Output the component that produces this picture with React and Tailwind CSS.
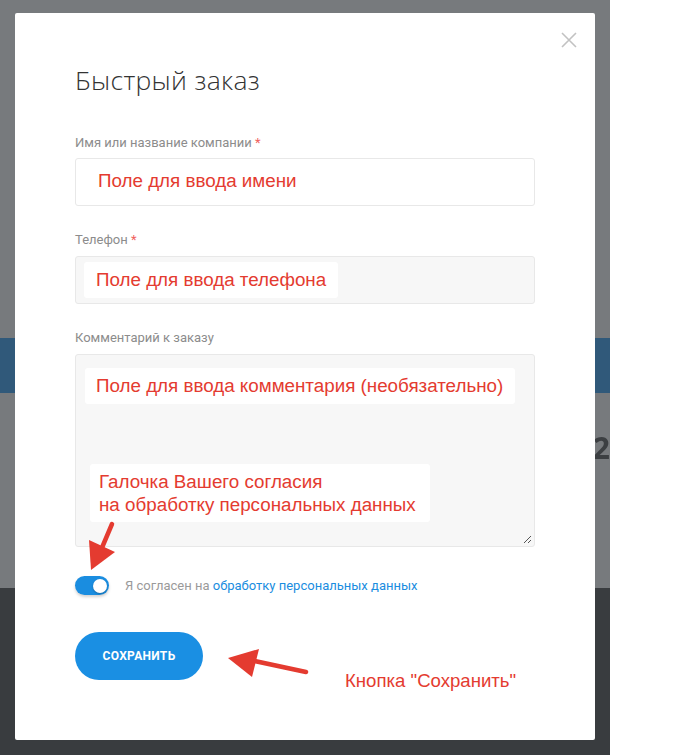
const redText = 'text-[#e43b30]'

const Label = ({ children, required }) => (
  <div className="text-[13px] leading-4 text-[#8c8c8c] font-['Roboto',sans-serif]">
    {children}
    {required && <span className="text-[#f0615c]"> *</span>}
  </div>
)

const Note = ({ children, className = '' }) => (
  <div className={`bg-white rounded-[3px] ${redText} text-[18.8px] leading-[23px] font-['Liberation_Sans',Arial,sans-serif] ${className}`}>
    {children}
  </div>
)

const Backdrop = () => (
  <div className="flex w-[681px] h-[755px]">
    <div className="w-[610px] flex flex-col">
      <div className="h-[338px] bg-[#777a7d]"></div>
      <div className="h-[55px] bg-[#30597a]"></div>
      <div className="h-[195px] bg-[#777a7d] flex justify-end pr-0 pt-[40px]">
        <span className="text-[30px] leading-[30px] font-bold text-[#3c3f42] font-['Open_Sans',sans-serif] blur-[0.6px]">2</span>
      </div>
      <div className="flex-1 bg-[#393c3f]"></div>
    </div>
    <div className="flex-1 bg-white"></div>
  </div>
)

const Arrows = () => (
  <svg className="absolute left-0 top-0 pointer-events-none" width="681" height="755">
    {/* arrow down to the switch */}
    <line x1="112" y1="524" x2="101" y2="550" stroke="#e43b30" strokeWidth="4.5" strokeLinecap="round" />
    <polygon points="89,540 115,552 91,570" fill="#e43b30" />
    {/* arrow left to the button */}
    <line x1="306" y1="672" x2="250" y2="660" stroke="#e43b30" strokeWidth="4.5" strokeLinecap="round" />
    <polygon points="228,658 259,649 252,677" fill="#e43b30" />
  </svg>
)

export default function App() {
  return (
    <div className="relative w-[681px] h-[755px] overflow-hidden font-['Roboto',sans-serif]">
      <Backdrop />

      {/* modal */}
      <div className="absolute left-[15px] top-[13px] w-[580px] h-[727px] bg-white rounded-[2px] px-[60px] pt-[51px]">
        <button className="absolute right-[18px] top-[19px]">
          <svg width="16" height="16" viewBox="0 0 16 16">
            <path d="M1 1 L15 15 M15 1 L1 15" stroke="#c2c2c2" strokeWidth="1.6" fill="none" />
          </svg>
        </button>

        <h2 className="text-[26.5px] leading-8 font-light text-[#333] font-['Open_Sans',sans-serif] tracking-[0.3px]">
          Быстрый заказ
        </h2>

        <div className="mt-[39px]">
          <Label required>Имя или название компании</Label>
          <div className="mt-[7px] h-[48px] w-[460px] border border-[#e8e8e8] rounded-[3px] bg-white flex items-center pl-[22px] pb-[1px]">
            <span className={`${redText} text-[18.8px] font-['Liberation_Sans',Arial,sans-serif]`}>Поле для ввода имени</span>
          </div>
        </div>

        <div className="mt-[26px]">
          <Label required>Телефон</Label>
          <div className="mt-2 h-[48px] w-[460px] border border-[#e8e8e8] rounded-[3px] bg-[#f7f7f7] pl-[8px] pt-[5px]">
            <Note className="w-[254px] h-[36px] pl-[12px] pt-[6px]">Поле для ввода телефона</Note>
          </div>
        </div>

        <div className="mt-[26px]">
          <Label>Комментарий к заказу</Label>
          <div className="relative mt-2 h-[193px] w-[460px] border border-[#e8e8e8] rounded-[3px] bg-[#f7f7f7] pl-[9px] pt-[13px]">
            <Note className="w-[430px] h-[36px] pl-[11px] pt-[6px]">Поле для ввода комментария (необязательно)</Note>
            <Note className="ml-[5px] mt-[60px] w-[340px] h-[58px] pl-[9px] pt-[6px]">
              Галочка Вашего согласия
              <br />
              на обработку персональных данных
            </Note>
            <svg className="absolute right-[2px] bottom-[2px]" width="9" height="9">
              <line x1="1" y1="8" x2="8" y2="1" stroke="#555" strokeWidth="1" />
              <line x1="5" y1="8" x2="8" y2="5" stroke="#555" strokeWidth="1" />
            </svg>
          </div>
        </div>

        <div className="mt-[29px] flex items-center gap-[16px]">
          <div className="w-[34px] h-[19px] rounded-full bg-[#1a8de0] shadow-[0_2px_3px_rgba(0,0,0,0.18)] flex items-center justify-end pr-[2px]">
            <div className="w-[14px] h-[14px] rounded-full bg-white shadow-[0_1px_2px_rgba(0,0,0,0.25)]"></div>
          </div>
          <span className="text-[13px] text-[#9a9a9a]">
            Я согласен на <span className="text-[#1a8de0]">обработку персональных данных</span>
          </span>
        </div>

        <div className="mt-[36px] flex items-center">
          <button className="w-[128px] h-[48px] rounded-full bg-[#1a8fe3] text-white text-[12px] font-bold tracking-[0.3px]">
            СОХРАНИТЬ
          </button>
        </div>
      </div>

      <Arrows />

      <div className={`absolute left-[345px] top-[669px] ${redText} text-[18.6px] leading-6 font-['Liberation_Sans',Arial,sans-serif]`}>
        Кнопка "Сохранить"
      </div>
    </div>
  )
}
